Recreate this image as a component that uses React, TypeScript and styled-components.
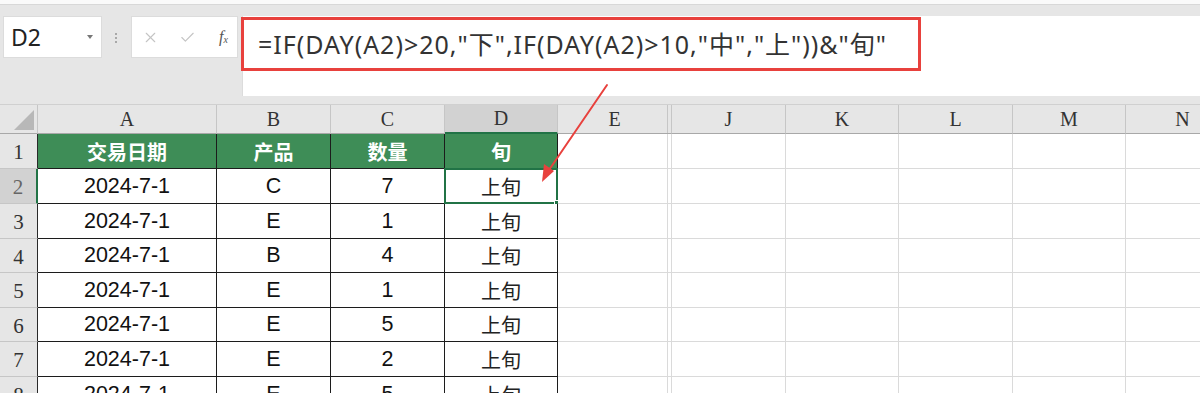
import React from 'react';
import styled, { createGlobalStyle } from 'styled-components';
import { X, Check } from 'lucide-react';

// DATA
const COLUMNS = [
    { key: 'A', w: 179 },
    { key: 'B', w: 114 },
    { key: 'C', w: 114 },
    { key: 'D', w: 113 },
    { key: 'E', w: 114 },
    { key: 'J', w: 114 },
    { key: 'K', w: 113 },
    { key: 'L', w: 114 },
    { key: 'M', w: 113 },
    { key: 'N', w: 114 },
];

const HEADER = ['交易日期', '产品', '数量', '旬'];
const ROWS = [
    ['2024-7-1', 'C', '7', '上旬'],
    ['2024-7-1', 'E', '1', '上旬'],
    ['2024-7-1', 'B', '4', '上旬'],
    ['2024-7-1', 'E', '1', '上旬'],
    ['2024-7-1', 'E', '5', '上旬'],
    ['2024-7-1', 'E', '2', '上旬'],
    ['2024-7-1', 'E', '5', '上旬'],
];
const ROW_HEIGHTS = [35, 35, 35, 34, 35, 34, 35, 35];
const TEMPLATE = `38px ${COLUMNS.map((c) => `${c.w}px`).join(' ')}`;
const FORMULA = '=IF(DAY(A2)>20,"下",IF(DAY(A2)>10,"中","上"))&"旬"';

const SANS = `"Liberation Sans", "Noto Sans CJK SC", sans-serif`;
const WIDE = `"Noto Sans", "Noto Sans CJK SC", sans-serif`;
const SERIF = `"Liberation Serif", "DejaVu Serif", serif`;

// STYLE
const GlobalStyle = createGlobalStyle`
    html, body {
        margin: 0;
        padding: 0;
        background: #e6e6e6;
        overflow: hidden;
    }
`;

const Page = styled.div`
    position: relative;
    width: 1200px;
    height: 393px;
    overflow: hidden;
    background: #e6e6e6;
    font-family: ${SANS};
`;

const TopStrip = styled.div`
    height: 4px;
    background: #fafafa;
    border-bottom: 1px solid #d8d8d8;
`;

const FormulaRow = styled.div`
    display: flex;
    align-items: flex-start;
    padding: 11px 0 0 3px;
    height: 80px;
`;

const NameBox = styled.div`
    display: flex;
    align-items: center;
    justify-content: space-between;
    box-sizing: border-box;
    width: 99px;
    height: 42px;
    padding: 0 8px 0 7px;
    background: #fff;
    border: 1px solid #dcdcdc;
    font-family: ${WIDE};
    font-size: 23px;
    color: #222;
`;

const Caret = styled.span`
    width: 0;
    height: 0;
    border-left: 3px solid transparent;
    border-right: 3px solid transparent;
    border-top: 4px solid #777;
`;

const Dots = styled.div`
    display: flex;
    flex-direction: column;
    gap: 2px;
    margin: 17px 14px 0 13px;
    span {
        width: 2px;
        height: 2px;
        background: #a8a8a8;
    }
`;

const ButtonBox = styled.div`
    display: flex;
    align-items: center;
    box-sizing: border-box;
    width: 107px;
    height: 42px;
    padding: 0 0 0 10px;
    gap: 20px;
    background: #fff;
    border: 1px solid #dcdcdc;
    color: #c4c4c4;
`;

const Fx = styled.span`
    font-family: ${SERIF};
    font-style: italic;
    font-size: 16px;
    color: #555;
    margin-left: 3px;
    sub {
        font-size: 10px;
        vertical-align: -1px;
    }
`;

const FormulaArea = styled.div`
    flex: 1;
    height: 80px;
    margin-left: 4px;
    background: #fff;
    border-left: 1px solid #dcdcdc;
`;

const Highlight = styled.div`
    display: flex;
    align-items: center;
    box-sizing: border-box;
    width: 680px;
    height: 54px;
    margin: 1px 0 0 -2px;
    padding: 0 0 2px 14px;
    border: 3px solid #e8413d;
    font-family: ${WIDE};
    font-size: 25px;
    letter-spacing: 1px;
    color: #333;
    white-space: nowrap;
`;

const Sheet = styled.div`
    margin-top: 8px;
    border-top: 1px solid #d0d0d0;
`;

const Row = styled.div<{ $h: number }>`
    display: grid;
    grid-template-columns: ${TEMPLATE};
    height: ${(p) => p.$h}px;
`;

const Corner = styled.div`
    display: flex;
    align-items: flex-end;
    justify-content: flex-end;
    box-sizing: border-box;
    padding: 0 3px 3px 0;
    border-right: 1px solid #c6c6c6;
    border-bottom: 1px solid #a8a8a8;
    &::after {
        content: '';
        width: 20px;
        height: 20px;
        background: #b8b8b8;
        clip-path: polygon(100% 0, 100% 100%, 0 100%);
    }
`;

const ColHead = styled.div<{ $active?: boolean; $gap?: boolean }>`
    display: flex;
    align-items: flex-end;
    justify-content: center;
    box-sizing: border-box;
    padding-bottom: 2px;
    background: ${(p) => (p.$active ? '#d2d2d2' : '#e6e6e6')};
    border-right: 1px solid #c6c6c6;
    border-bottom: ${(p) => (p.$active ? '2px solid #217346' : '1px solid #a8a8a8')};
    box-shadow: ${(p) => (p.$gap ? 'inset -3px 0 0 #e6e6e6, inset -4px 0 0 #c6c6c6' : 'none')};
    font-family: ${SERIF};
    font-size: 20px;
    color: #333;
`;

const RowHead = styled.div<{ $active?: boolean }>`
    display: flex;
    align-items: center;
    justify-content: center;
    box-sizing: border-box;
    padding-top: 3px;
    background: ${(p) => (p.$active ? '#d2d2d2' : '#e6e6e6')};
    border-right: ${(p) => (p.$active ? '2px solid #217346' : '1px solid #2a2a2a')};
    border-bottom: 1px solid #c6c6c6;
    font-family: ${SERIF};
    font-size: 21px;
    color: ${(p) => (p.$active ? '#666' : '#333')};
`;

const Cell = styled.div<{ $table?: boolean; $head?: boolean; $cjk?: boolean; $gap?: boolean }>`
    position: relative;
    display: flex;
    align-items: center;
    justify-content: center;
    box-sizing: border-box;
    background: ${(p) => (p.$head ? '#3e8d57' : '#fff')};
    border-right: 1px solid ${(p) => (p.$table ? '#1c1c1c' : '#dadada')};
    border-bottom: 1px solid ${(p) => (p.$table ? '#1c1c1c' : '#dadada')};
    box-shadow: ${(p) => (p.$gap ? 'inset -3px 0 0 #fff, inset -4px 0 0 #dadada' : 'none')};
    font-size: ${(p) => (p.$head || p.$cjk ? 20 : 21.5)}px;
    font-weight: ${(p) => (p.$head ? 700 : 400)};
    color: ${(p) => (p.$head ? '#fff' : p.$cjk ? '#222' : '#111')};
    white-space: nowrap;
`;

const Selection = styled.div`
    position: absolute;
    inset: -1px -1px -1px -1px;
    border: 2px solid #217346;
    pointer-events: none;
    &::after {
        content: '';
        position: absolute;
        right: -5px;
        bottom: -5px;
        width: 5px;
        height: 5px;
        background: #217346;
        border: 1px solid #fff;
    }
`;

const Arrow = styled.svg`
    position: absolute;
    top: 0;
    left: 0;
    pointer-events: none;
`;

const App: React.FC = () => {
    const rows = [HEADER, ...ROWS];

    return (
        <Page>
            <GlobalStyle />
            <TopStrip />

            {/* SECTION :: FORMULA BAR */}
            <FormulaRow>
                <NameBox>
                    <span>D2</span>
                    <Caret />
                </NameBox>
                <Dots>
                    <span />
                    <span />
                    <span />
                </Dots>
                <ButtonBox>
                    <X size={17} strokeWidth={1.6} />
                    <Check size={17} strokeWidth={1.6} />
                    <Fx>
                        f<sub>x</sub>
                    </Fx>
                </ButtonBox>
                <FormulaArea>
                    <Highlight>{FORMULA}</Highlight>
                </FormulaArea>
            </FormulaRow>

            {/* SECTION :: GRID */}
            <Sheet>
                <Row $h={29}>
                    <Corner />
                    {COLUMNS.map((c) => (
                        <ColHead key={c.key} $active={c.key === 'D'} $gap={c.key === 'E'}>
                            {c.key}
                        </ColHead>
                    ))}
                </Row>
                {rows.map((r, i) => (
                    <Row key={i} $h={ROW_HEIGHTS[i]}>
                        <RowHead $active={i === 1}>{i + 1}</RowHead>
                        {COLUMNS.map((c, j) => (
                            <Cell
                                key={c.key}
                                $table={j < 4}
                                $head={i === 0 && j < 4}
                                $cjk={i > 0 && j === 3}
                                $gap={c.key === 'E'}
                            >
                                {j < 4 ? r[j] : ''}
                                {i === 1 && j === 3 && <Selection />}
                            </Cell>
                        ))}
                    </Row>
                ))}
            </Sheet>

            {/* SECTION :: ANNOTATION */}
            <Arrow width={1200} height={393} viewBox="0 0 1200 393">
                <line x1={607} y1={85} x2={549} y2={170} stroke="#e8413d" strokeWidth={2} strokeLinecap="round" />
                <polygon points="542,182 554,171 544,164" fill="#e8413d" />
            </Arrow>
        </Page>
    );
};

export default App;
